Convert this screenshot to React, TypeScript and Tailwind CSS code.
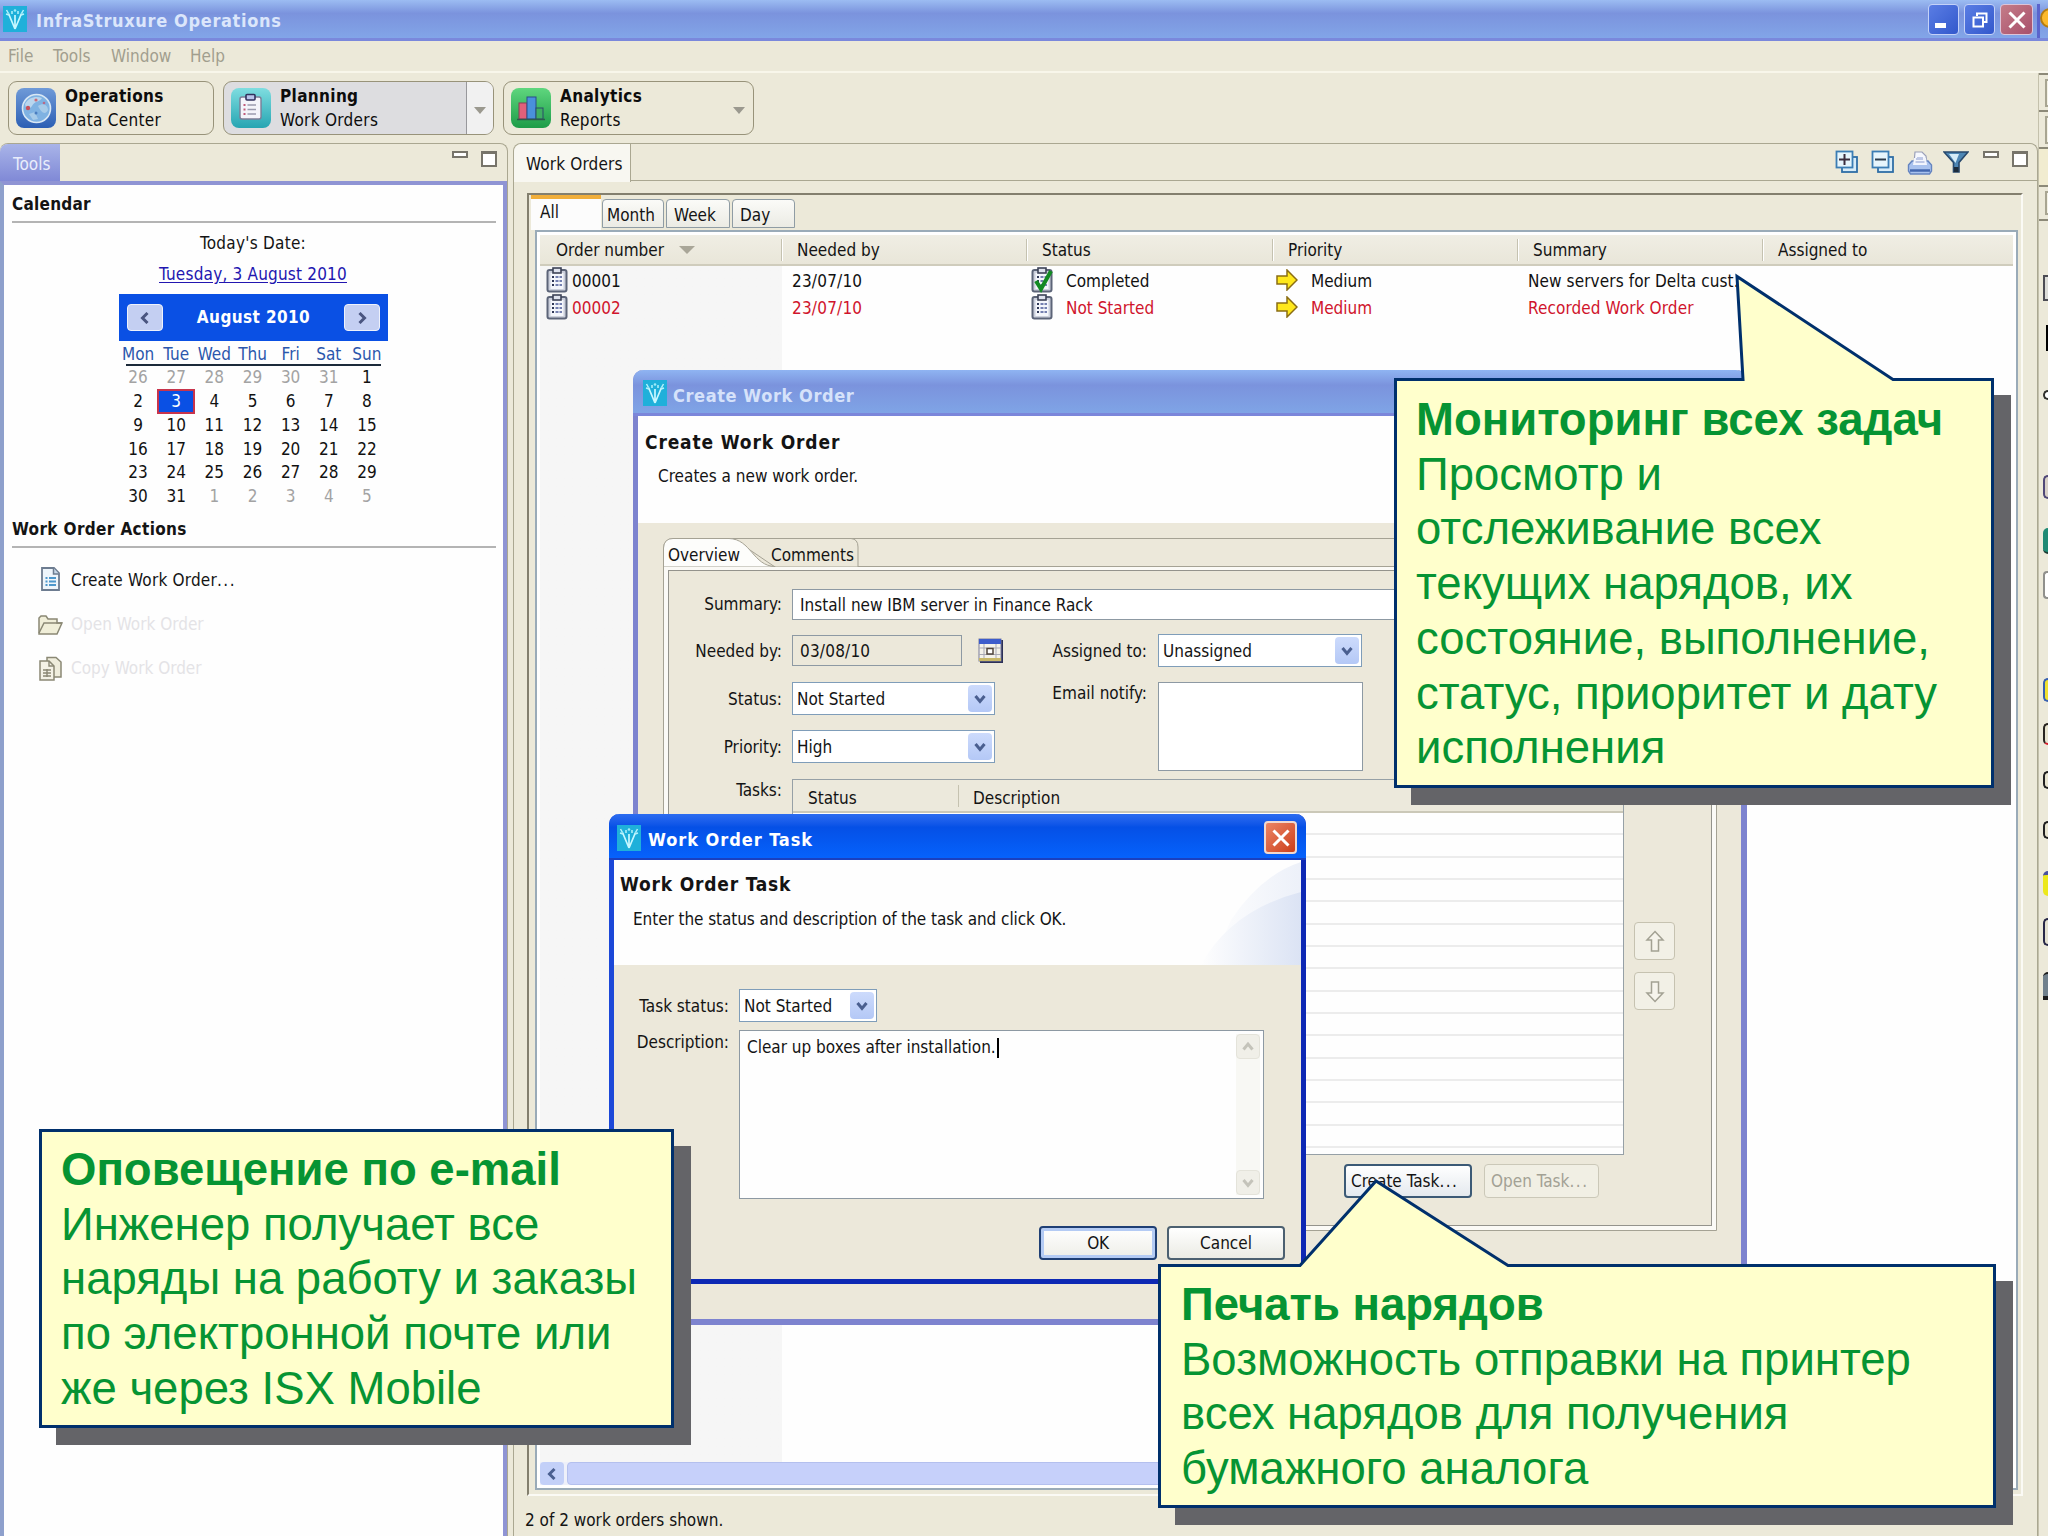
import React from 'react';

const weekDays = ['Mon', 'Tue', 'Wed', 'Thu', 'Fri', 'Sat', 'Sun'];
const days = [
  26, 27, 28, 29, 30, 31, 1,
  2, 3, 4, 5, 6, 7, 8,
  9, 10, 11, 12, 13, 14, 15,
  16, 17, 18, 19, 20, 21, 22,
  23, 24, 25, 26, 27, 28, 29,
  30, 31, 1, 2, 3, 4, 5,
];

const orders = [
  { id: '00001', needed: '23/07/10', status: 'Completed', priority: 'Medium', summary: 'New servers for Delta cust.', done: true, color: 'text-[#111111]' },
  { id: '00002', needed: '23/07/10', status: 'Not Started', priority: 'Medium', summary: 'Recorded Work Order', done: false, color: 'text-[#d0142c]' },
];

const LogoIcon = () => (
  <svg viewBox="0 0 24 26" className="h-[26px] w-6 shrink-0">
    <rect width="24" height="26" fill="#1fb0da" />
    <path d="M12 23 V9 M12 23 L5.500 7.500 M12 23 L18.500 7.500" stroke="#c8f8ff" strokeWidth="1.700" fill="none" />
    <path d="M5.500 7.500 L3.500 4 M18.500 7.500 L20.500 4 M9 5 V8 M15 5 V8 M3 8 L6 9 M21 8 L18 9" stroke="#b4f2fc" strokeWidth="1.500" fill="none" />
    <circle cx="12" cy="4.500" r="1.300" fill="#9eeaf8" />
  </svg>
);

const GlobeIcon = () => (
  <svg viewBox="0 0 40 40" className="h-10 w-10 shrink-0">
    <defs>
      <linearGradient id="globeBg" x1="0" y1="0" x2="0" y2="1">
        <stop offset="0" stopColor="#6f9ad8" />
        <stop offset="1" stopColor="#2c5fb4" />
      </linearGradient>
    </defs>
    <rect width="40" height="40" rx="8" fill="url(#globeBg)" />
    <circle cx="20.500" cy="20.500" r="14" fill="#7fb2e2" stroke="#d9e8f5" strokeWidth="1.600" />
    <path d="M9 16 C13 9 20 8 26 10 C24 14 18 13 16 18 C13 22 10 22 9 16 Z" fill="#b9d6ee" />
    <path d="M22 18 C27 14 32 17 32 22 C29 28 25 24 22 18 Z M13 26 L19 24 L22 31 L17 32 Z" fill="#a7cbe9" />
    <circle cx="12" cy="20" r="2.200" fill="#c8505c" />
    <circle cx="20" cy="12" r="1.600" fill="#c86a78" />
    <circle cx="28" cy="15" r="1.300" fill="#b86a88" />
    <circle cx="20" cy="25" r="1.500" fill="#4a7ec0" />
  </svg>
);

const PlanningIcon = () => (
  <svg viewBox="0 0 40 40" className="h-10 w-10 shrink-0">
    <defs>
      <linearGradient id="planBg" x1="0" y1="0" x2="0" y2="1">
        <stop offset="0" stopColor="#7fdde0" />
        <stop offset="1" stopColor="#26a5b2" />
      </linearGradient>
    </defs>
    <rect width="40" height="40" rx="8" fill="url(#planBg)" />
    <rect x="9" y="9" width="21" height="22" rx="2" fill="#f4f4fa" stroke="#7c7c96" strokeWidth="1.400" />
    <rect x="15" y="6.500" width="9" height="5.500" rx="1" fill="#b8c4ea" stroke="#30305c" strokeWidth="1.600" />
    <path d="M16.500 17 H25 M16.500 21.500 H25 M16.500 26 H25" stroke="#9a9aae" strokeWidth="1.600" />
    <path d="M12.500 17 H14.500 M12.500 21.500 H14.500 M12.500 26 H14.500" stroke="#c05a7a" strokeWidth="1.800" />
  </svg>
);

const AnalyticsIcon = () => (
  <svg viewBox="0 0 40 40" className="h-10 w-10 shrink-0">
    <defs>
      <linearGradient id="anaBg" x1="0" y1="0" x2="0" y2="1">
        <stop offset="0" stopColor="#5fd67e" />
        <stop offset="1" stopColor="#1d9c48" />
      </linearGradient>
    </defs>
    <rect width="40" height="40" rx="8" fill="url(#anaBg)" />
    <rect x="8" y="15" width="8" height="16" fill="#e0607a" stroke="#8a3c58" />
    <rect x="16" y="9" width="9" height="22" fill="#4a90dc" stroke="#2a4c88" />
    <rect x="25" y="20" width="7" height="11" fill="#3fae62" stroke="#2a4c6a" />
    <path d="M6 31.500 H34" stroke="#2c5a4c" strokeWidth="1.500" />
  </svg>
);

const ClipboardIcon = ({ done = false }: { done?: boolean }) => (
  <svg viewBox="0 0 22 26" className="h-[26px] w-[22px] shrink-0">
    <rect x="1.500" y="3" width="19" height="21.500" rx="2" fill="#ccd0dc" stroke="#5c6478" strokeWidth="2" />
    <rect x="4.500" y="6" width="13" height="16" fill="#f4f6fb" />
    <rect x="7" y="1" width="8" height="5" fill="#dfe3ee" stroke="#3c4256" strokeWidth="1.600" />
    <path d="M6 10 H8 M6 14 H8 M6 18 H8" stroke="#303858" strokeWidth="2" />
    <path d="M9.500 10 H16 M9.500 14 H16 M9.500 18 H16" stroke="#7480b0" strokeWidth="2" strokeDasharray="3 1" />
    {done && <path d="M5 14 L10 22 L20 4" stroke="#128a22" strokeWidth="4" fill="none" />}
  </svg>
);

const YellowArrow = () => (
  <svg viewBox="0 0 22 22" className="h-[22px] w-[22px] shrink-0">
    <path d="M1 7 H11 V1 L21 11 L11 21 V15 H1 Z" fill="#ffe81c" stroke="#8a6d14" strokeWidth="1.500" />
  </svg>
);

const MinMax = ({ className = '' }: { className?: string }) => (
  <div className={`flex items-start ${className}`}>
    <div className="h-[7px] w-4 border-2 border-[#77746a] bg-white"></div>
    <div className="h-4 w-4 border-2 border-t-[3px] border-[#77746a] bg-white"></div>
  </div>
);

const Triangle = () => (
  <svg viewBox="0 0 12 7" className="h-[7px] w-3 shrink-0">
    <path d="M0 0 H12 L6 7 Z" fill="#9b998f" />
  </svg>
);

const Chevron = ({ d, color = '#4a5f90' }: { d: string; color?: string }) => (
  <svg viewBox="0 0 12 12" className="h-3 w-3">
    <path d={d} stroke={color} strokeWidth="3" fill="none" />
  </svg>
);

const DOWN = 'M1.500 3 L6 8.500 L10.500 3';
const UP = 'M1.500 8.500 L6 3 L10.500 8.500';
const LEFT = 'M8.500 1 L3.500 6 L8.500 11';
const RIGHT = 'M3.500 1 L8.500 6 L3.500 11';

const Select = ({ text, className = '' }: { text: string; className?: string }) => (
  <div className={`flex h-[33px] shrink-0 items-center border border-[#7f9db9] bg-white p-[2px] pl-[4px] ${className}`}>
    <span className="flex-1 pt-[2px]">{text}</span>
    <div className="flex h-[27px] w-6 items-center justify-center rounded-sm bg-gradient-to-b from-[#cddbfc] to-[#b4c8f6]">
      <Chevron d={DOWN} />
    </div>
  </div>
);

const FormLabel = ({ children, className = '' }: { children: React.ReactNode; className?: string }) => (
  <span className={`shrink-0 text-right ${className}`}>{children}</span>
);

const TitleBar = () => (
  <header className="flex h-[41px] shrink-0 border-b-[3px] border-[#7a88dc] bg-gradient-to-b from-[#9cbcf2] via-[#7b93dd] via-35% to-[#82a5e8]">
    <div className="flex flex-1 items-center pl-[3px]">
      <LogoIcon />
      <span className="pt-[3px] pl-[9px] text-[18px] font-bold tracking-[0.65px] text-[#dbe6fb]">InfraStruxure Operations</span>
    </div>
    <div className="flex gap-[5px] pt-[4px]">
      <div className="flex h-[31px] w-[31px] items-end rounded border border-[#c4d2f8] bg-gradient-to-br from-[#5a7de4] to-[#3358cc] pb-[6px] pl-[6px]">
        <div className="h-[5px] w-[11px] bg-white"></div>
      </div>
      <div className="flex h-[31px] w-[31px] items-center justify-center rounded border border-[#c4d2f8] bg-gradient-to-br from-[#5a7de4] to-[#3358cc]">
        <svg viewBox="0 0 16 16" className="h-4 w-4">
          <path d="M5 4 V1.500 H14.500 V10 H12" stroke="#fff" strokeWidth="2" fill="none" />
          <rect x="1.500" y="5.500" width="9.500" height="9" stroke="#fff" strokeWidth="2" fill="none" />
        </svg>
      </div>
      <div className="flex h-[31px] w-[33px] items-center justify-center rounded border border-[#dcc4d8] bg-gradient-to-br from-[#c47c88] to-[#a8506c]">
        <svg viewBox="0 0 18 18" className="h-[18px] w-[18px]">
          <path d="M1.500 1.500 L16.500 16.500 M16.500 1.500 L1.500 16.500" stroke="#fff" strokeWidth="3" />
        </svg>
      </div>
      <div className="-ml-[1px] h-full w-[11px] overflow-hidden border-l-[3px] border-[#5a64cc] pt-[4px]">
        <div className="h-5 w-5 rounded-full border-2 border-[#b47c10] bg-[#fbb92c]"></div>
      </div>
    </div>
  </header>
);

const Toolbar = () => (
  <div className="flex h-[70px] shrink-0 gap-[9px] pt-2 pl-2 text-[#0c0c0c]">
    <button className="flex h-[54px] w-[206px] items-center rounded-[9px] border border-[#98937a] pl-[7px] text-left">
      <GlobeIcon />
      <span className="flex flex-col pl-[9px] leading-6">
        <b className="-mt-px text-[17px] tracking-[0.35px]">Operations</b>
        <span className="tracking-[0.3px]">Data Center</span>
      </span>
    </button>
    <button className="flex h-[54px] w-[271px] items-center overflow-hidden rounded-[9px] border border-[#98937a] bg-[#dddde0] pl-[7px] text-left">
      <PlanningIcon />
      <span className="flex flex-1 flex-col pl-[9px] leading-6">
        <b className="-mt-px text-[17px] tracking-[0.35px]">Planning</b>
        <span className="tracking-[0.3px]">Work Orders</span>
      </span>
      <span className="flex h-full w-[27px] items-center justify-center border-l border-[#98989c] bg-[#f1f1f1] pt-[4px]">
        <Triangle />
      </span>
    </button>
    <button className="flex h-[54px] w-[251px] items-center rounded-[9px] border border-[#98937a] pl-[7px] text-left">
      <AnalyticsIcon />
      <span className="flex flex-1 flex-col pl-[9px] leading-6">
        <b className="-mt-px text-[17px] tracking-[0.35px]">Analytics</b>
        <span className="tracking-[0.3px]">Reports</span>
      </span>
      <span className="pt-[4px] pr-[8px]">
        <Triangle />
      </span>
    </button>
  </div>
);

const CalendarWidget = () => (
  <div className="ml-[115px] w-[269px]">
    <div className="flex h-[47px] items-center justify-between bg-[#0a50e4] px-2 text-white">
      <div className="flex h-[27px] w-[36px] items-center justify-center rounded-sm border border-[#eef2fc] bg-[#c4cff2]">
        <Chevron d={LEFT} color="#4a5580" />
      </div>
      <b className="text-[17px] tracking-[0.4px]">August 2010</b>
      <div className="flex h-[27px] w-[36px] items-center justify-center rounded-sm border border-[#eef2fc] bg-[#c4cff2]">
        <Chevron d={RIGHT} color="#4a5580" />
      </div>
    </div>
    <div className="grid h-6 w-[267px] grid-cols-7 text-center leading-[26px] text-[#2b57ac]">
      {weekDays.map((d) => (
        <span key={d}>{d}</span>
      ))}
    </div>
    <div className="mx-[7px] -mt-px h-[2px] bg-[#1c2a3a]"></div>
    <div className="grid h-[143px] w-[267px] grid-cols-7 grid-rows-6 text-center leading-[23px]">
      {days.map((d, i) => {
        const other = i < 6 || i > 36;
        if (i === 8) {
          return <span key={i} className="-mt-px border-2 border-[#c8344c] bg-[#0a50e4] leading-[20px] text-white">{d}</span>;
        }
        return <span key={i} className={other ? 'text-[#a3a3a3]' : 'text-[#111111]'}>{d}</span>;
      })}
    </div>
  </div>
);

const ToolsPanel = () => (
  <aside className="flex w-[508px] shrink-0 flex-col rounded-t-lg border-t border-r border-[#aaa791]">
    <div className="flex h-[37px] shrink-0 justify-between">
      <div className="w-[60px] rounded-tl-lg bg-gradient-to-b from-[#a9b4e8] to-[#8089d6] pl-[13px] leading-[40px] text-[#e9edfb]">Tools</div>
      <MinMax className="gap-[13px] pt-[7px] pr-[10px]" />
    </div>
    <div className="flex-1 border-t-4 border-r-4 border-l-4 border-[#8f94d4] border-l-[#8ea0cc] bg-[#fefefe] pt-[8px]">
      <h2 className="mr-[7px] ml-[8px] h-[30px] border-b-2 border-[#b4b4b4] text-[17px] leading-[22px] font-bold tracking-[0.25px]">Calendar</h2>
      <div className="mt-[8px] pr-[1px] text-center leading-6 tracking-[0.25px]">Today's Date:</div>
      <div className="mt-[7px] mb-2 pr-[1px] text-center leading-6 tracking-[0.2px] text-[#2216b0] underline underline-offset-2">Tuesday, 3 August 2010</div>
      <CalendarWidget />
      <h2 className="mt-[9px] mr-[7px] ml-[8px] h-[30px] border-b-2 border-[#b4b4b4] text-[17px] leading-[22px] font-bold tracking-[0.35px]">Work Order Actions</h2>
      <div className="mt-[10px] flex flex-col pl-[33px]">
        <div className="flex h-[45px] items-center">
          <svg viewBox="0 0 26 26" className="-mt-1 h-[26px] w-[26px]">
            <path d="M5 2 H17 L22 7 V24 H5 Z" fill="#eef5fb" stroke="#6d7c90" strokeWidth="1.800" />
            <path d="M16.500 2 V8 H22" fill="#c8d8e8" stroke="#6d7c90" strokeWidth="1.500" />
            <path d="M8.500 12 H10.500 M8.500 15.500 H10.500 M8.500 19 H10.500 M12 12 H19 M12 15.500 H19 M12 19 H19" stroke="#4d97cc" strokeWidth="1.800" />
          </svg>
          <span className="pl-[8px] tracking-[0.2px]">Create Work Order<span className="tracking-[1.500px]">...</span></span>
        </div>
        <div className="flex h-[44px] items-center text-[#e4e3e6]">
          <svg viewBox="0 0 26 22" className="h-[22px] w-[26px]">
            <path d="M2 19 V4 L4 2 H9 L11 5 H20 V9 H25 L20 20 H2 Z" fill="#f0eed8" stroke="#8a8874" strokeWidth="1.500" />
            <path d="M2 19 L7 9 H25" fill="none" stroke="#8a8874" strokeWidth="1.500" />
          </svg>
          <span className="pl-[8px]">Open Work Order</span>
        </div>
        <div className="flex h-[44px] items-center text-[#e4e3e6]">
          <svg viewBox="0 0 26 26" className="h-[26px] w-[26px]">
            <path d="M10 6 V1.500 H19 L24 6 V21 H17" fill="#efeddc" stroke="#8a8874" strokeWidth="1.500" />
            <path d="M3 5 H12 L17 10 V24 H3 Z" fill="#f4f2e6" stroke="#8a8874" strokeWidth="1.500" />
            <path d="M12 5 V10 H17 M6 14 H14 M6 17 H14 M6 20 H14 M10 13 V21" fill="none" stroke="#8a8874" strokeWidth="1.400" />
          </svg>
          <span className="pl-[8px]">Copy Work Order</span>
        </div>
      </div>
    </div>
  </aside>
);

const PanelIcons = () => (
  <div className="flex items-start pt-[6px]">
    <svg viewBox="0 0 24 24" className="h-6 w-6">
      <rect x="7" y="7" width="15" height="15" fill="#d8ecf8" stroke="#2f6ea6" strokeWidth="1.800" />
      <rect x="1.500" y="1.500" width="16" height="16" fill="#e6f5fc" stroke="#3b7db4" strokeWidth="1.800" />
      <path d="M9.500 4 V15 M4 9.500 H15" stroke="#3a2c3c" strokeWidth="2" />
    </svg>
    <svg viewBox="0 0 24 24" className="ml-[12px] h-6 w-6">
      <rect x="7" y="7" width="15" height="15" fill="#d8ecf8" stroke="#2f6ea6" strokeWidth="1.800" />
      <rect x="1.500" y="1.500" width="16" height="16" fill="#e6f5fc" stroke="#3b7db4" strokeWidth="1.800" />
      <path d="M4 9.500 H15" stroke="#2c3c4c" strokeWidth="2" />
    </svg>
    <svg viewBox="0 0 26 26" className="ml-[12px] h-[26px] w-[26px]">
      <path d="M7 13 L8 2 H15 L19 6 L20 13 Z" fill="#f6f8fe" stroke="#9aa0b8" strokeWidth="1.200" />
      <path d="M10 8 H16 M10 11 H17" stroke="#8a9cd0" strokeWidth="1.200" />
      <path d="M1.500 15 L5 11 H21 L24.500 15 V21 L22.500 24 H3.500 L1.500 21 Z" fill="#a9c2ee" stroke="#6484c0" strokeWidth="1.400" />
      <path d="M3 20.500 H23" stroke="#4468b0" strokeWidth="2.500" />
      <path d="M7 8 H19 L20 15 H6 Z" fill="#f2f5fd" />
      <path d="M9 9 H16 M8.500 12 H17.500" stroke="#8a9cd0" strokeWidth="1.200" />
    </svg>
    <svg viewBox="0 0 26 24" className="ml-[10px] h-6 w-[26px]">
      <path d="M1 2 H25 L16 12.500 V22 H10.500 V12.500 Z" fill="#4d86b4" stroke="#27486c" strokeWidth="1.600" />
      <path d="M6 4 H16 L12.500 13 Z" fill="#d4ebf8" />
      <rect x="11" y="17" width="4.500" height="5" fill="#1c2c3c" />
    </svg>
    <MinMax className="gap-[13px] pt-px pr-[9px] pl-[14px]" />
  </div>
);

const OrdersTable = () => (
  <div className="mr-[3px] ml-[6px] flex flex-1 flex-col border-2 border-[#9aabb8] bg-white p-[3px]">
    <div className="grid h-[31px] shrink-0 grid-cols-[241px_245px_246px_245px_245px_1fr] border-b-2 border-[#cfccbc] bg-gradient-to-b from-[#f0eee4] to-[#e9e6d9] leading-[30px]">
      <div className="flex items-center pl-[16px]">
        Order number
        <span className="pl-[15px]"><svg viewBox="0 0 16 8" className="h-2 w-4"><path d="M0 0 H16 L8 8 Z" fill="#a9a698" /></svg></span>
      </div>
      {['Needed by', 'Status', 'Priority', 'Summary', 'Assigned to'].map((h) => (
        <div key={h} className="flex items-center">
          <div className="h-[22px] w-[2px] border-l border-[#c5c2b0] bg-white"></div>
          <span className="pl-[14px]">{h}</span>
        </div>
      ))}
    </div>
    <div className="flex-1 bg-gradient-to-r from-[#f6f6f6] from-[242px] to-[#fefefe] to-[242px]">
      {orders.map((o) => (
        <div key={o.id} className={`grid h-[27px] grid-cols-[241px_245px_246px_245px_245px_1fr] items-center ${o.color}`}>
          <div className="flex items-center pl-[6px]">
            <ClipboardIcon />
            <span className="pt-[3px] pl-[4px]">{o.id}</span>
          </div>
          <span className="pt-[3px] pl-[11px] tracking-[0.2px]">{o.needed}</span>
          <div className="flex items-center pl-[5px]">
            <ClipboardIcon done={o.done} />
            <span className="pt-[3px] pl-[13px]">{o.status}</span>
          </div>
          <div className="flex items-center pl-[4px]">
            <YellowArrow />
            <span className="pt-[3px] pl-[13px]">{o.priority}</span>
          </div>
          <span className="pt-[3px] pl-[11px] tracking-[0.1px] whitespace-nowrap">{o.summary}</span>
        </div>
      ))}
    </div>
    <div className="flex h-[23px] shrink-0 gap-[3px] bg-[#eef0fa]">
      <div className="flex w-[24px] items-center justify-center rounded-sm bg-[#c3d0f8]">
        <Chevron d={LEFT} />
      </div>
      <div className="w-[1200px] rounded-sm border border-[#b4c0ee] bg-[#c6d0fa]"></div>
    </div>
  </div>
);

const OrdersPanel = () => (
  <main className="ml-[5px] flex flex-1 flex-col rounded-t-lg border-t border-r border-l border-[#aaa791]">
    <div className="flex h-[37px] shrink-0 justify-between border-b border-[#aaa791]">
      <div className="h-[38px] w-[117px] rounded-tl-lg border-r border-[#aaa791] bg-[#f8f7f1] pl-[12px] leading-[41px] tracking-[0.15px]">Work Orders</div>
      <PanelIcons />
    </div>
    <div className="mt-[12px] mr-[14px] ml-[13px] flex h-[1303px] shrink-0 flex-col border-2 border-[#fbfaf5] border-t-[#837f6e] border-l-[#837f6e] pb-[4px]">
      <div className="flex h-[35px] shrink-0 items-start">
        <div className="ml-[2px] h-[35px] w-[70px] border-t-[4px] border-[#f0ae3a] bg-[#fcfcfc] pl-[9px] leading-[26px]">All</div>
        <div className="mt-[4px] ml-px h-[29px] w-[62px] rounded-t border border-[#8f9ca4] bg-gradient-to-b from-[#fbfbf8] to-[#ebebe4] pl-[4px] leading-[31px]">Month</div>
        <div className="mt-[4px] ml-[2px] h-[29px] w-[64px] rounded-t border border-[#8f9ca4] bg-gradient-to-b from-[#fbfbf8] to-[#ebebe4] pl-[7px] leading-[31px]">Week</div>
        <div className="mt-[4px] ml-[2px] h-[29px] w-[63px] rounded-t border border-[#8f9ca4] bg-gradient-to-b from-[#fbfbf8] to-[#ebebe4] pl-[7px] leading-[31px]">Day</div>
      </div>
      <OrdersTable />
    </div>
    <div className="mt-[12px] pl-[11px] leading-6">2 of 2 work orders shown.</div>
  </main>
);

// sliver of the palette docked behind the window
const edgeIcons = [
  'mt-[54px] h-[26px] border-2 border-r-0 border-[#4c4c54] bg-[#dcdcd8]',
  'mt-[24px] ml-[3px] h-[26px] bg-black',
  'mt-[39px] h-[10px] rounded-l-full border-2 border-r-0 border-[#30302c] bg-white',
  'mt-[75px] h-6 rounded-l-lg border-2 border-r-0 border-[#504878] bg-[#d8d0c8]',
  'mt-[29px] h-[26px] rounded-l-lg border-b-2 border-[#1c3c34] bg-[#1f8a74]',
  'mt-[17px] h-7 rounded-l border-2 border-r-0 border-[#90908c] bg-white',
  'mt-[79px] h-6 rounded-l-lg border-2 border-r-0 border-[#3860b0] bg-[#f0e030]',
  'mt-[21px] h-[22px] rounded-l-lg border-2 border-r-0 border-[#282420] border-b-[#d81c2c] bg-[#e8e4d0]',
  'mt-[26px] h-[18px] rounded-l-lg border-2 border-r-0 border-[#202020] bg-[#e8e4d0]',
  'mt-[32px] h-[18px] rounded-l-lg border-2 border-r-0 border-[#202020] bg-[#e8e4d0]',
  'mt-[32px] h-[25px] rounded-l-lg border-t-4 border-[#4850a0] bg-[#ece81c]',
  'mt-[22px] h-7 rounded-l-lg border-2 border-r-0 border-[#282848] bg-[#e4e0d0]',
  'mt-[26px] h-7 rounded-tl-lg border-t-2 border-b-4 border-[#1c1c1c] bg-[#70808c]',
];

const EdgeStrip = () => (
  <div className="w-[10px] shrink-0 overflow-hidden border-l border-[#c4c1ac]">
    {[1, 2].map((n) => (
      <div key={n} className="h-[37px] border-t-2 border-[#8c8978] pt-1 pl-[6px]">
        <div className="h-7 border-2 border-r-0 border-[#a8a592] bg-[#f4f2e6]"></div>
      </div>
    ))}
    <div className="h-[38px] border-t-2 border-[#8c8978] bg-[#f1ecd0]"></div>
    <div className="h-[36px] border-t-2 border-b-2 border-[#8c8978] pt-1 pl-[6px]">
      <div className="h-6 border-2 border-r-0 border-[#a8a592] bg-[#f4f2e6]"></div>
    </div>
    <div className="flex flex-col pl-[4px]">
      {edgeIcons.map((cls, i) => (
        <div key={i} className={cls}></div>
      ))}
    </div>
  </div>
);

const CreateOrderDialog = () => (
  <div className="absolute top-[370px] left-[633px] flex h-[955px] w-[1114px] flex-col rounded-t-[10px] border-r-[6px] border-b-[6px] border-l-[5px] border-[#7d83cf] bg-[#ece8da]">
    <div className="-mx-[5px] flex h-[46px] shrink-0 items-center rounded-t-[10px] border-b-[3px] border-[#7b86da] bg-gradient-to-b from-[#8fb4f2] via-[#7b93dd] via-35% to-[#7fa4e6] pt-[3px] pl-[10px]">
      <LogoIcon />
      <span className="pt-[5px] pl-[6px] text-[18px] font-bold tracking-[0.6px] text-[#d6e2fa]">Create Work Order</span>
    </div>
    <div className="h-[107px] shrink-0 bg-[#fefefe] pt-[15px] pl-[7px]">
      <h1 className="text-[19px] leading-[22px] font-bold tracking-[0.85px]">Create Work Order</h1>
      <p className="mt-[12px] pl-[13px] leading-[22px]">Creates a new work order.</p>
    </div>
    <div className="mt-[15px] ml-[25px] flex h-[693px] w-[1054px] shrink-0 flex-col rounded-tl-[10px] border border-[#a5a294]">
      <div className="relative flex h-[28px] shrink-0 border-b border-[#a5a294] leading-[32px]">
        <svg viewBox="0 0 200 29" className="absolute -top-px -left-px h-[29px] w-[200px]">
          <path d="M70 0.500 H188 Q195 1 195 9 V29 H112 Z" fill="#ece8da" stroke="#a5a294" />
          <path d="M0.500 29 V10 Q1 0.500 10 0.500 H66 C88 1 90 28 112 28.500 V29 Z" fill="#fdfdfb" stroke="#a5a294" />
        </svg>
        <span className="relative pl-[4px]">Overview</span>
        <span className="relative pl-[31px]">Comments</span>
      </div>
      <div className="flex flex-1 flex-col bg-[#fbfaf6] p-[4px] pt-[3px]">
        <div className="flex flex-1 flex-col border border-[#94938c] bg-[#ece8da] pt-[18px]">
          <div className="flex h-[31px] items-center gap-[10px]">
            <FormLabel className="w-[113px]">Summary:</FormLabel>
            <div className="mr-5 h-[31px] flex-1 border border-[#8d99a3] bg-white pl-[7px] leading-[30px]">Install new IBM server in Finance Rack</div>
          </div>
          <div className="mt-[14px] flex">
            <div className="flex w-[326px] flex-col gap-[15px]">
              <div className="flex h-[33px] items-center">
                <FormLabel className="mr-[10px] w-[113px] pt-[2px]">Needed by:</FormLabel>
                <div className="h-[31px] w-[170px] shrink-0 border border-[#8d99a3] pl-[7px] leading-[31px] tracking-[0.2px]">03/08/10</div>
                <svg viewBox="0 0 26 26" className="ml-[16px] h-[26px] w-[26px] shrink-0">
                  <rect x="2" y="2" width="23" height="23" fill="#2c3056" />
                  <rect x="1" y="1" width="22" height="22" fill="#f4f2ea" stroke="#7a7c9c" />
                  <rect x="1" y="1" width="22" height="5" fill="#3c5ccc" />
                  <path d="M6 6 V20 M18 6 V20 M1 10 H23 M1 16.500 H23" stroke="#a9a9b4" />
                  <rect x="9" y="10.500" width="6" height="5.500" fill="#fff" stroke="#50463c" strokeWidth="1.500" />
                  <rect x="1" y="20" width="22" height="3" fill="#c8b868" />
                </svg>
              </div>
              <div className="flex items-center gap-[10px]">
                <FormLabel className="w-[113px] pt-[2px]">Status:</FormLabel>
                <Select text="Not Started" className="w-[203px]" />
              </div>
              <div className="flex items-center gap-[10px]">
                <FormLabel className="w-[113px] pt-[2px]">Priority:</FormLabel>
                <Select text="High" className="w-[203px]" />
              </div>
            </div>
            <div className="flex flex-col gap-[15px]">
              <div className="flex items-center gap-[11px]">
                <FormLabel className="w-[152px] pt-[2px]">Assigned to:</FormLabel>
                <Select text="Unassigned" className="w-[204px]" />
              </div>
              <div className="flex gap-[11px]">
                <FormLabel className="w-[152px] leading-[22px]">Email notify:</FormLabel>
                <div className="h-[89px] w-[205px] border border-[#8d99a3] bg-white"></div>
              </div>
            </div>
          </div>
          <div className="mt-[8px] flex h-[376px] gap-[10px]">
            <FormLabel className="w-[113px] leading-[22px]">Tasks:</FormLabel>
            <div className="flex w-[832px] flex-col overflow-hidden border border-[#96a0a6] bg-[#fefefe]">
              <div className="flex h-[33px] shrink-0 items-center border-b-2 border-[#cbc8b8] bg-[#ece9dc]">
                <span className="w-[165px] pt-[6px] pl-[15px]">Status</span>
                <div className="h-[22px] border-l border-[#c5c2b0]"></div>
                <span className="pt-[6px] pl-[14px]">Description</span>
              </div>
              {Array.from({ length: 15 }).map((_, i) => (
                <div key={i} className="h-[22.35px] shrink-0 border-b-2 border-[#ececec]"></div>
              ))}
            </div>
            <div className="flex flex-col gap-[12px] pt-[143px]">
              {['M9 1.500 L17 10 H12.500 V21 H5.500 V10 H1 Z', 'M9 21.500 L17 13 H12.500 V2 H5.500 V13 H1 Z'].map((d) => (
                <div key={d} className="flex h-[38px] w-[41px] items-center justify-center rounded border border-[#c6c2b0] bg-[#f2f0e6]">
                  <svg viewBox="0 0 18 23" className="h-[23px] w-[20px]">
                    <path d={d} fill="#f6f4ec" stroke="#a3a193" strokeWidth="1.500" />
                  </svg>
                </div>
              ))}
            </div>
          </div>
          <div className="mt-[9px] ml-[675px] flex gap-[12px] leading-[31px]">
            <button className="h-[34px] w-[128px] rounded border-2 border-[#3c5a76] bg-gradient-to-b from-white to-[#e4e9ee] pl-[5px] text-left">Create Task<span className="tracking-[1.500px]">...</span></button>
            <button className="h-[34px] w-[115px] rounded border border-[#cbc8b8] bg-[#f1efe4] pl-[6px] text-left text-[#a3a194]">Open Task<span className="tracking-[1.500px]">...</span></button>
          </div>
        </div>
      </div>
    </div>
  </div>
);

const TaskDialog = () => (
  <div className="absolute top-[814px] left-[609px] flex h-[470px] w-[697px] flex-col rounded-t-[10px] border-r-[5px] border-b-[5px] border-l-[5px] border-[#0d28b4] border-l-[#1c48d8] bg-[#ece8da]">
    <div className="-mx-[5px] flex h-[46px] shrink-0 items-center rounded-t-[10px] border-b-2 border-[#1a40c0] bg-gradient-to-b from-[#2c6cf0] via-[#0550e6] via-30% to-[#0662fc] pt-[3px] pr-[9px] pl-[8px]">
      <LogoIcon />
      <span className="flex-1 pt-[4px] pl-[7px] text-[18px] font-bold tracking-[0.95px] text-white">Work Order Task</span>
      <div className="flex h-[33px] w-[33px] items-center justify-center rounded border-2 border-[#f0d8d0] bg-gradient-to-br from-[#ea8464] to-[#cc3c14]">
        <svg viewBox="0 0 18 18" className="h-[18px] w-[18px]">
          <path d="M1.500 1.500 L16.500 16.500 M16.500 1.500 L1.500 16.500" stroke="#fff" strokeWidth="3" />
        </svg>
      </div>
    </div>
    <div className="relative h-[105px] shrink-0 bg-[#fefefe] pt-[13px] pl-[6px]">
      <svg viewBox="0 0 110 105" className="absolute top-0 right-0 h-[105px] w-[110px]">
        <defs>
          <linearGradient id="swoosh" x1="0" y1="0.500" x2="1" y2="0.500">
            <stop offset="0" stopColor="#fefefe" />
            <stop offset="1" stopColor="#dbe3f4" />
          </linearGradient>
        </defs>
        <path d="M40 60 Q70 15 110 2 V105 H20 Z" fill="url(#swoosh)" opacity="0.500" />
        <path d="M10 105 Q40 50 110 32 V105 Z" fill="url(#swoosh)" />
      </svg>
      <h1 className="relative text-[19px] leading-[22px] font-bold tracking-[0.8px]">Work Order Task</h1>
      <p className="relative mt-[13px] pl-[13px] leading-[22px] tracking-[-0.070px]">Enter the status and description of the task and click OK.</p>
    </div>
    <div className="mt-[24px] flex items-center gap-[10px]">
      <FormLabel className="w-[115px] pt-[2px]">Task status:</FormLabel>
      <Select text="Not Started" className="w-[138px]" />
    </div>
    <div className="mt-[8px] flex gap-[10px]">
      <FormLabel className="w-[115px] leading-[24px]">Description:</FormLabel>
      <div className="flex h-[169px] w-[525px] justify-between border border-[#8d99a3] bg-[#fefefe] p-[3px] pl-[7px]">
        <span className="leading-[26px]">Clear up boxes after installation.<span className="ml-[1px] inline-block h-5 border-l-2 border-black align-middle"></span></span>
        <div className="flex w-6 flex-col justify-between bg-[#f8f8f4]">
          <div className="flex h-[25px] items-center justify-center rounded-sm border border-[#e4e3da] bg-[#f0efe8]">
            <Chevron d={UP} color="#c4c3ba" />
          </div>
          <div className="flex h-[25px] items-center justify-center rounded-sm border border-[#e4e3da] bg-[#f0efe8]">
            <Chevron d={DOWN} color="#c4c3ba" />
          </div>
        </div>
      </div>
    </div>
    <div className="mt-[27px] flex justify-end gap-[10px] pr-[16px]">
      <button className="h-[34px] w-[118px] rounded border-2 border-[#1f3f74] bg-gradient-to-b from-white to-[#eeeee8] pt-[2px] tracking-[-0.4px] shadow-[inset_0_0_0_3px_#b4cbf4]">OK</button>
      <button className="h-[34px] w-[118px] rounded border-2 border-[#4c6070] bg-gradient-to-b from-white to-[#ebebe4] pt-[2px]">Cancel</button>
    </div>
  </div>
);

const Callout = ({ title, lines, className, children }: { title: string; lines: string[]; className: string; children?: React.ReactNode }) => (
  <section className={`absolute border-[3px] border-[#00306c] bg-[#ffffcc] font-['Liberation_Sans',Arial,sans-serif] text-[45.5px] leading-[54.7px] tracking-normal whitespace-nowrap text-[#069433] shadow-[17px_17px_0_#646468] ${className}`}>
    {children}
    <h3 className="font-bold">{title}</h3>
    {lines.map((l) => (
      <div key={l}>{l}</div>
    ))}
  </section>
);

const App = () => {
  return (
    <div className="relative flex h-[1536px] w-[2048px] flex-col overflow-hidden bg-[#ece9d9] font-['DejaVu_Sans_Condensed','DejaVu_Sans',sans-serif] text-[17px] tracking-[0px] text-[#141414]">
      <TitleBar />
      <nav className="flex h-8 shrink-0 border-b-2 border-[#f8f6ea] pl-[8px] leading-[31px] text-[#a19e8e]">
        <span className="w-[45px]">File</span>
        <span className="w-[58px]">Tools</span>
        <span className="w-[79px]">Window</span>
        <span>Help</span>
      </nav>
      <div className="flex flex-1">
        <div className="flex w-[2038px] shrink-0 flex-col">
          <Toolbar />
          <div className="flex flex-1">
            <ToolsPanel />
            <OrdersPanel />
          </div>
        </div>
        <EdgeStrip />
      </div>

      <CreateOrderDialog />
      <TaskDialog />

      <Callout
        title="Мониторинг всех задач"
        lines={['Просмотр и', 'отслеживание всех', 'текущих нарядов, их', 'состояние, выполнение,', 'статус, приоритет и дату', 'исполнения']}
        className="top-[378px] left-[1394px] h-[410px] w-[600px] pt-[12px] pl-[19px]"
      >
        <svg viewBox="0 0 170 112" className="absolute -top-[109px] left-[334px] h-[112px] w-[170px]">
          <path d="M12 112 V107.500 L6 4.500 L162 107.500 V112 Z" fill="#ffffcc" />
          <path d="M8 107.500 H12 L6 4.500 L162 107.500 H166" fill="none" stroke="#00306c" strokeWidth="3" />
        </svg>
      </Callout>
      <Callout
        title="Оповещение по e-mail"
        lines={['Инженер получает все', 'наряды на работу и заказы', 'по электронной почте или', 'же через ISX Mobile']}
        className="top-[1129px] left-[39px] h-[299px] w-[635px] pt-[11px] pl-[19px]"
      />
      <Callout
        title="Печать нарядов"
        lines={['Возможность отправки на принтер', 'всех нарядов для получения', 'бумажного аналога']}
        className="top-[1264px] left-[1158px] h-[244px] w-[838px] pt-[11px] pl-[20px]"
      >
        <svg viewBox="0 0 220 94" className="absolute -top-[91px] left-[133px] h-[94px] w-[220px]">
          <path d="M6 94 V89.500 L82 5 L214 89.500 V94 Z" fill="#ffffcc" />
          <path d="M2 89.500 H6 L82 5 L214 89.500 H218" fill="none" stroke="#00306c" strokeWidth="3" />
        </svg>
      </Callout>
    </div>
  );
};

export default App;
